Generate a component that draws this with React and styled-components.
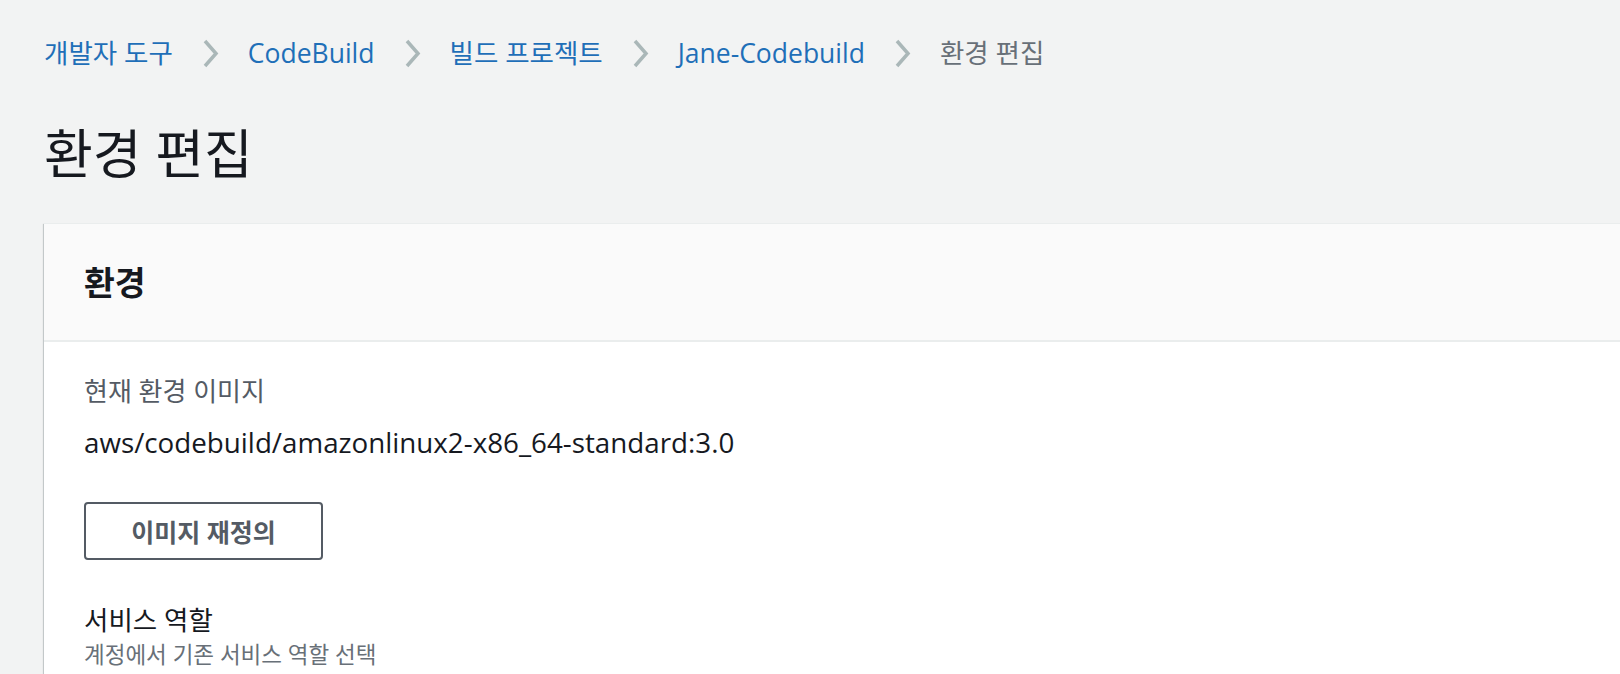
import React from "react";
import styled, { createGlobalStyle } from "styled-components";

const GlobalStyle = createGlobalStyle`
  html, body {
    margin: 0;
    padding: 0;
    background: #f2f3f3;
    overflow: hidden;
  }
  body {
    font-family: "Open Sans", "Noto Sans CJK KR", sans-serif;
    color: #16191f;
  }
`;

const Page = styled.div`
  padding-left: 44px;
  height: 674px;
`;

const Breadcrumbs = styled.nav`
  display: flex;
  align-items: center;
  gap: 29px;
  padding-top: 36px;
  height: 34px;
  font-size: 26.5px;
  line-height: 34px;
`;

const Crumb = styled.a`
  color: ${(p) => (p.$current ? "#687078" : "#1f6fb8")};
  text-decoration: none;
  white-space: nowrap;
`;

const Chevron = styled.svg`
  width: 17px;
  height: 29px;
  flex: none;
`;

const Title = styled.h1`
  margin: 54px 0 0;
  font-size: 53px;
  font-weight: 400;
  line-height: 60px;
  color: #16191f;
`;

const Panel = styled.section`
  margin-top: 39px;
  width: calc(100% + 40px);
  background: #fff;
  border-top: 1px solid #eaeded;
  box-shadow: 0 1px 1px 0 rgba(0, 28, 36, 0.3),
    1px 1px 1px 0 rgba(0, 28, 36, 0.15), -1px 1px 1px 0 rgba(0, 28, 36, 0.15);
  height: 460px;
`;

const PanelHeader = styled.header`
  display: flex;
  align-items: center;
  height: 116px;
  padding-left: 40px;
  background: #fafafa;
  border-bottom: 2px solid #eaeded;
`;

const PanelTitle = styled.h2`
  margin: 0;
  font-size: 33.5px;
  font-weight: 700;
  line-height: 40px;
`;

const PanelBody = styled.div`
  padding: 32px 40px 0;
`;

const Label = styled.div`
  font-size: ${(p) => (p.$strong ? "26.5px" : "26px")};
  line-height: 35px;
  color: ${(p) => (p.$strong ? "#16191f" : "#545b64")};
  margin-top: ${(p) => p.$top || 0}px;
`;

const Value = styled.div`
  margin-top: 16px;
  font-size: 27.75px;
  line-height: 35px;
  color: #16191f;
`;

const Description = styled.div`
  margin-top: 2px;
  font-size: 22.5px;
  line-height: 30px;
  color: #687078;
`;

const Button = styled.button`
  display: block;
  margin-top: 42px;
  width: 239px;
  height: 58px;
  padding: 0;
  border: 2px solid #545b64;
  border-radius: 4px;
  background: #fff;
  color: #545b64;
  font-family: inherit;
  font-size: 25px;
  font-weight: 700;
  cursor: pointer;
`;

const crumbs = ["개발자 도구", "CodeBuild", "빌드 프로젝트", "Jane-Codebuild"];

const Arrow = () => (
  <Chevron viewBox="0 0 17 29">
    <polyline
      points="3,2 14,14.5 3,27"
      fill="none"
      stroke="#aab7b8"
      strokeWidth="3.5"
    />
  </Chevron>
);

const App = () => {
  return (
    <Page>
      <GlobalStyle />
      <Breadcrumbs>
        {crumbs.map((c) => (
          <React.Fragment key={c}>
            <Crumb href="#">{c}</Crumb>
            <Arrow />
          </React.Fragment>
        ))}
        <Crumb $current>환경 편집</Crumb>
      </Breadcrumbs>

      <Title>환경 편집</Title>

      <Panel>
        <PanelHeader>
          <PanelTitle>환경</PanelTitle>
        </PanelHeader>
        <PanelBody>
          <Label>현재 환경 이미지</Label>
          <Value>aws/codebuild/amazonlinux2-x86_64-standard:3.0</Value>
          <Button>이미지 재정의</Button>
          <Label $strong $top={43}>
            서비스 역할
          </Label>
          <Description>계정에서 기존 서비스 역할 선택</Description>
        </PanelBody>
      </Panel>
    </Page>
  );
};

export default App;
